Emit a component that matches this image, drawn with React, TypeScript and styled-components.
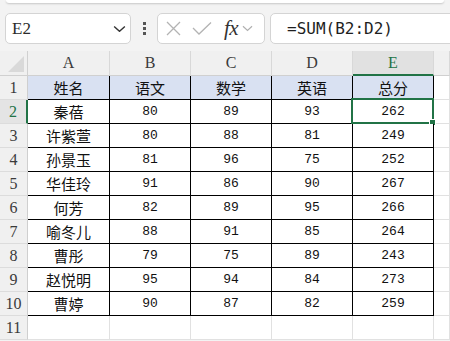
import React from 'react';
import styled, { createGlobalStyle } from 'styled-components';

const Global = createGlobalStyle`
  html, body { margin: 0; padding: 0; background: #f3f3f3; }
  body { width: 450px; height: 341px; overflow: hidden; font-family: "Liberation Sans", "Noto Sans CJK SC", sans-serif; }
`;

const Page = styled.div`
  display: flex;
  flex-direction: column;
  width: 450px;
  height: 341px;
  overflow: hidden;
`;

const TopStrip = styled.div`
  height: 3px;
  margin: 0 6px;
  background: #ffffff;
  border-radius: 0 0 7px 7px;
  box-shadow: 0 1px 2px rgba(0, 0, 0, 0.18);
`;

const Toolbar = styled.div`
  display: flex;
  align-items: center;
  height: 31px;
  margin-top: 10px;
  padding-left: 5px;
  & > * { flex-shrink: 0; }
`;

const NameBox = styled.div`
  box-sizing: border-box;
  width: 126px;
  height: 31px;
  background: #fff;
  border: 1px solid #d4d4d4;
  border-radius: 5px;
  display: flex;
  align-items: center;
  justify-content: space-between;
  padding: 0 4px 0 6px;
  font-family: "Liberation Serif", serif;
  font-size: 17px;
  color: #2a2a2a;
`;

const DotsWrap = styled.div`
  width: 26px;
  display: flex;
  flex-direction: column;
  align-items: center;
  gap: 2px;
`;

const Dot = styled.span`
  width: 3px;
  height: 3px;
  background: #555;
`;

const ButtonGroup = styled.div`
  box-sizing: border-box;
  width: 108px;
  height: 31px;
  background: #fff;
  border: 1px solid #d4d4d4;
  border-radius: 5px;
  display: flex;
  align-items: center;
  padding-left: 7px;
  gap: 10px;
`;

const Fx = styled.span`
  font-family: "Liberation Serif", serif;
  font-style: italic;
  font-size: 21px;
  color: #333;
  margin-left: 2px;
  margin-right: -6px;
  letter-spacing: -0.5px;
`;

const FormulaBox = styled.div`
  box-sizing: border-box;
  width: 190px;
  height: 31px;
  margin-left: 5px;
  background: #fff;
  border: 1px solid #d4d4d4;
  border-radius: 5px;
  display: flex;
  align-items: center;
  padding-left: 16px;
  font-family: "DejaVu Sans Mono", monospace;
  font-size: 16px;
  color: #1e1e1e;
`;

const Sheet = styled.div`
  margin-top: 7px;
  display: grid;
  grid-template-columns: 28px 82px 81px 81px 81px 81px 1fr;
  grid-template-rows: 25px repeat(11, 24px);
  background: #fff;
`;

const Corner = styled.div`
  box-sizing: border-box;
  background: #f0f0f0;
  border-right: 1px solid #d0d0d0;
  border-bottom: 1px solid #d0d0d0;
  display: flex;
  align-items: flex-end;
  justify-content: flex-end;
  padding: 0 3px 3px 0;
`;

const ColHead = styled.div<{ $active?: boolean }>`
  box-sizing: border-box;
  background: ${p => (p.$active ? '#e1e1e1' : '#f0f0f0')};
  border-right: 1px solid #d8d8d8;
  border-bottom: ${p => (p.$active ? '2px solid #217346' : '1px solid #d0d0d0')};
  display: flex;
  align-items: center;
  justify-content: center;
  font-family: "Liberation Serif", serif;
  font-size: 16px;
  color: ${p => (p.$active ? '#217346' : '#3a3a3a')};
  padding-top: ${p => (p.$active ? '1px' : '0')};
`;

const RowHead = styled.div<{ $active?: boolean }>`
  box-sizing: border-box;
  background: ${p => (p.$active ? '#e4e4e4' : '#f0f0f0')};
  border-right: ${p => (p.$active ? '2px solid #217346' : '1px solid #cfcfcf')};
  border-bottom: 1px solid #dcdcdc;
  display: flex;
  align-items: center;
  justify-content: center;
  font-family: "Liberation Serif", serif;
  font-size: 16px;
  color: ${p => (p.$active ? '#217346' : '#3a3a3a')};
`;

const Cell = styled.div<{ $head?: boolean; $num?: boolean }>`
  position: relative;
  box-sizing: border-box;
  background: ${p => (p.$head ? '#d9e1f2' : '#fff')};
  border-right: 1px solid #000;
  border-bottom: 1px solid #000;
  display: flex;
  align-items: center;
  justify-content: center;
  font-family: ${p => (p.$num ? '"Liberation Mono", monospace' : '"Noto Sans CJK SC", sans-serif')};
  font-size: ${p => (p.$num ? '13px' : '15px')};
  color: #111;
`;

const EmptyCell = styled.div`
  box-sizing: border-box;
  background: #fff;
  border-right: 1px solid #e1e1e1;
  border-bottom: 1px solid #e1e1e1;
`;

const Selection = styled.div`
  position: absolute;
  left: -2px;
  top: -2px;
  right: -1px;
  bottom: -1px;
  border: 2px solid #217346;
  pointer-events: none;
`;

const Handle = styled.div`
  position: absolute;
  right: -4px;
  bottom: -4px;
  width: 5px;
  height: 5px;
  background: #217346;
  border: 1px solid #fff;
`;

const headers = ['姓名', '语文', '数学', '英语', '总分'];
const rows: [string, number, number, number, number][] = [
  ['秦蓓', 80, 89, 93, 262],
  ['许紫萱', 80, 88, 81, 249],
  ['孙景玉', 81, 96, 75, 252],
  ['华佳玲', 91, 86, 90, 267],
  ['何芳', 82, 89, 95, 266],
  ['喻冬儿', 88, 91, 85, 264],
  ['曹彤', 79, 75, 89, 243],
  ['赵悦明', 95, 94, 84, 273],
  ['曹婷', 90, 87, 82, 259],
];

const Chevron = ({ color = '#333', size = 13 }: { color?: string; size?: number }) => (
  <svg width={size} height={size * 0.6} viewBox="0 0 13 8" fill="none">
    <path d="M1 1.5 L6.5 6.5 L12 1.5" stroke={color} strokeWidth="1.4" />
  </svg>
);

export default function App() {
  return (
    <Page>
      <Global />
      <TopStrip />
      <Toolbar>
        <NameBox>
          <span>E2</span>
          <Chevron />
        </NameBox>
        <DotsWrap>
          <Dot />
          <Dot />
          <Dot />
        </DotsWrap>
        <ButtonGroup>
          <svg width="17" height="17" viewBox="0 0 17 17" fill="none">
            <path d="M2 2 L15 15 M15 2 L2 15" stroke="#b3b3b3" strokeWidth="1.3" />
          </svg>
          <svg width="20" height="15" viewBox="0 0 20 15" fill="none">
            <path d="M1 7 L7 13 L19 1.5" stroke="#b3b3b3" strokeWidth="1.3" />
          </svg>
          <Fx>fx</Fx>
          <Chevron color="#b0b0b0" size={11} />
        </ButtonGroup>
        <FormulaBox>=SUM(B2:D2)</FormulaBox>
      </Toolbar>
      <Sheet>
        <Corner>
          <svg width="16" height="16" viewBox="0 0 16 16">
            <path d="M16 0 L16 16 L0 16 Z" fill="#d9d9d9" />
          </svg>
        </Corner>
        {['A', 'B', 'C', 'D', 'E', 'F'].map(l => (
          <ColHead key={l} $active={l === 'E'}>
            {l === 'F' ? '' : l}
          </ColHead>
        ))}
        <RowHead>1</RowHead>
        {headers.map(h => (
          <Cell key={h} $head>
            {h}
          </Cell>
        ))}
        <EmptyCell />
        {rows.map((r, i) => (
          <React.Fragment key={r[0]}>
            <RowHead $active={i === 0}>{i + 2}</RowHead>
            <Cell>{r[0]}</Cell>
            <Cell $num>{r[1]}</Cell>
            <Cell $num>{r[2]}</Cell>
            <Cell $num>{r[3]}</Cell>
            <Cell $num>
              {r[4]}
              {i === 0 && (
                <Selection>
                  <Handle />
                </Selection>
              )}
            </Cell>
            <EmptyCell />
          </React.Fragment>
        ))}
        <RowHead>11</RowHead>
        {[0, 1, 2, 3, 4, 5].map(k => (
          <EmptyCell key={k} />
        ))}
      </Sheet>
    </Page>
  );
}
